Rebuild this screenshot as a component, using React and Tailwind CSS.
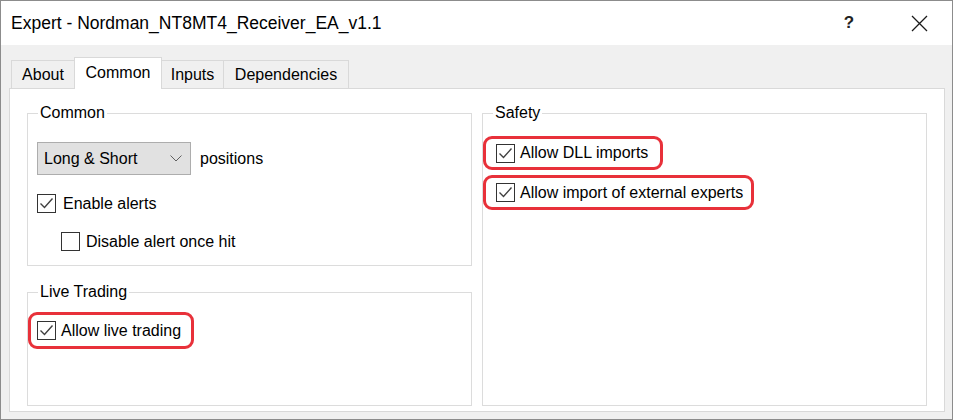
import React from 'react';

const CheckBox = ({ checked }) => (
  <span className="w-[19px] h-[19px] shrink-0 border border-[#333333] bg-white flex items-center justify-center">
    {checked && (
      <svg width="17" height="17" viewBox="0 0 17 17">
        <polyline points="2.5,8.5 6.5,12.5 14.5,3.5" fill="none" stroke="#404040" strokeWidth="1.4" />
      </svg>
    )}
  </span>
);

const Marked = ({ children, className }) => (
  <div className={`flex items-center border-[3px] border-[#e8313a] rounded-[9px] ${className}`}>{children}</div>
);

const Group = ({ title, className, children }) => (
  <fieldset className={`border border-[#dcdcdc] ${className}`}>
    <legend className="ml-[10px] px-[2px] text-[16px] leading-[20px] text-black">{title}</legend>
    {children}
  </fieldset>
);

export default function App() {
  const tabs = [
    { name: 'About', w: 'w-[64px]', active: false },
    { name: 'Common', w: 'w-[88px] -ml-px', active: true },
    { name: 'Inputs', w: 'w-[63px] -ml-px', active: false },
    { name: 'Dependencies', w: 'w-[126px] -ml-px', active: false },
  ];

  return (
    <div className="w-[953px] h-[420px] bg-[#f0f0f0] border border-[#8c8c8c] flex flex-col font-['Liberation_Sans',Arial,sans-serif] text-black overflow-hidden">
      <div className="h-[44px] shrink-0 bg-white flex items-center pl-[10px]">
        <span className="text-[17.5px]">Expert - Nordman_NT8MT4_Receiver_EA_v1.1</span>
        <span className="ml-auto text-[17px] w-[20px] text-center font-bold text-[#222]">?</span>
        <svg className="ml-[52px] mr-[24px]" width="17" height="17" viewBox="0 0 17 17">
          <path d="M1 1 L16 16 M16 1 L1 16" stroke="#1a1a1a" strokeWidth="1.3" />
        </svg>
      </div>

      <div className="pt-[12px] pl-[8px]">
        <div className="flex items-end h-[31px] ml-[2px]">
          {tabs.map((t) => (
            <div
              key={t.name}
              className={`${t.w} flex items-center justify-center text-[16px] border-t border-l border-r border-[#d9d9d9] ${t.active ? 'h-[32px] -mb-px bg-white relative z-10 pb-[2px]' : 'h-[28px] bg-[#f0f0f0]'}`}
            >
              {t.name}
            </div>
          ))}
        </div>

        <div className="w-[936px] h-[324px] bg-white border border-[#d9d9d9] flex gap-[10px] px-[17px] pt-[14px]">
          <div className="w-[445px] flex flex-col">
            <Group title="Common" className="h-[163px]">
              <div className="pl-[9px] pt-[19px]">
                <div className="flex items-center">
                  <div className="w-[154px] h-[33px] bg-[#e1e1e1] border border-[#adadad] flex items-center pl-[6px] pr-[8px] text-[16px]">
                    <span>Long &amp; Short</span>
                    <svg className="ml-auto" width="12" height="7" viewBox="0 0 12 7">
                      <polyline points="0.5,0.5 6,6 11.5,0.5" fill="none" stroke="#606060" strokeWidth="1" />
                    </svg>
                  </div>
                  <span className="ml-[9px] text-[16px]">positions</span>
                </div>
                <div className="flex items-center h-[19px] mt-[19px] text-[16px]">
                  <CheckBox checked />
                  <span className="ml-[7px]">Enable alerts</span>
                </div>
                <div className="flex items-center h-[19px] mt-[19px] ml-[24px] text-[16px]">
                  <CheckBox />
                  <span className="ml-[6px]">Disable alert once hit</span>
                </div>
              </div>
            </Group>

            <Group title="Live Trading" className="h-[124px] mt-[16px]">
              <Marked className="w-fit h-[37px] mt-[10px] pl-[6px] pr-[10px] text-[16px]">
                <CheckBox checked />
                <span className="ml-[5px]">Allow live trading</span>
              </Marked>
            </Group>
          </div>

          <div className="w-[445px]">
            <Group title="Safety" className="h-[303px]">
              <Marked className="w-fit h-[34px] mt-[13px] pl-[10px] pr-[12px] text-[16px]">
                <CheckBox checked />
                <span className="ml-[5px]">Allow DLL imports</span>
              </Marked>
              <Marked className="w-fit h-[35px] mt-[5px] pl-[10px] pr-[8px] text-[16px]">
                <CheckBox checked />
                <span className="ml-[5px]">Allow import of external experts</span>
              </Marked>
            </Group>
          </div>
        </div>
      </div>
    </div>
  );
}
